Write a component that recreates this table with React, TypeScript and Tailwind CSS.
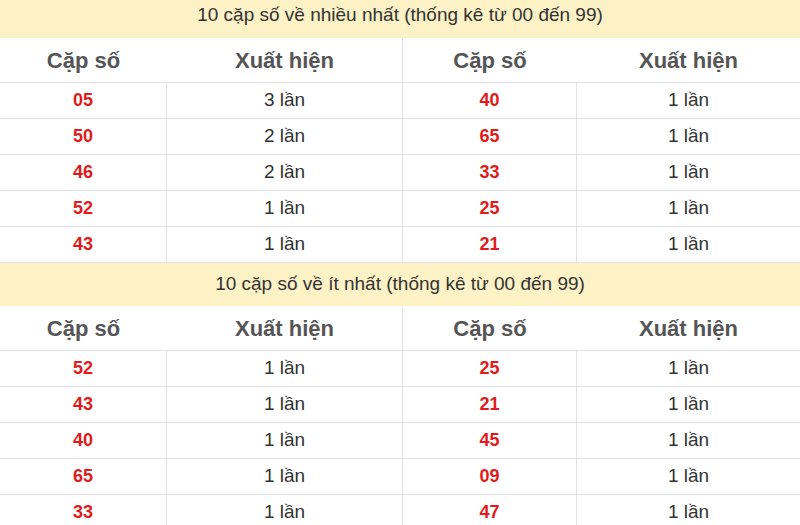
import React from "react";

const top: [string, string, string, string][] = [
  ["05", "3 lần", "40", "1 lần"],
  ["50", "2 lần", "65", "1 lần"],
  ["46", "2 lần", "33", "1 lần"],
  ["52", "1 lần", "25", "1 lần"],
  ["43", "1 lần", "21", "1 lần"],
];
const bottom: [string, string, string, string][] = [
  ["52", "1 lần", "25", "1 lần"],
  ["43", "1 lần", "21", "1 lần"],
  ["40", "1 lần", "45", "1 lần"],
  ["65", "1 lần", "09", "1 lần"],
  ["33", "1 lần", "47", "1 lần"],
];

function Header() {
  return (
    <div className="grid grid-cols-[403px_1fr] h-[45px] border-b border-[#e2e2e2] text-[22px] font-bold text-[#555]">
      <div className="grid grid-cols-[167px_1fr] items-center border-r border-[#e2e2e2]">
        <div className="text-center">Cặp số</div>
        <div className="text-center">Xuất hiện</div>
      </div>
      <div className="grid grid-cols-[174px_1fr] items-center">
        <div className="text-center">Cặp số</div>
        <div className="text-center">Xuất hiện</div>
      </div>
    </div>
  );
}

function Rows({ rows }: { rows: [string, string, string, string][] }) {
  return (
    <>
      {rows.map((r, i) => (
        <div
          key={i}
          className="grid grid-cols-[167px_236px_174px_1fr] h-[36px] border-b border-[#e2e2e2] text-[19px]"
        >
          <div className="flex items-center justify-center border-r border-[#e2e2e2] font-bold text-[18px] text-[#e11b1b]">{r[0]}</div>
          <div className="flex items-center justify-center border-r border-[#e2e2e2] text-[#333]">{r[1]}</div>
          <div className="flex items-center justify-center border-r border-[#e2e2e2] font-bold text-[18px] text-[#e11b1b]">{r[2]}</div>
          <div className="flex items-center justify-center text-[#333]">{r[3]}</div>
        </div>
      ))}
    </>
  );
}

export default function App() {
  return (
    <div className="w-[800px] h-[525px] overflow-hidden bg-white font-['Liberation_Sans',Arial,sans-serif]">
      <div className="h-[38px] bg-[#fdf1c6] text-[19px] text-[#333] text-center leading-[22px] pt-[4px]">
        10 cặp số về nhiều nhất (thống kê từ 00 đến 99)
      </div>
      <Header />
      <Rows rows={top} />
      <div className="h-[43px] bg-[#fdf1c6] text-[19px] text-[#333] flex items-center justify-center">
        10 cặp số về ít nhất (thống kê từ 00 đến 99)
      </div>
      <Header />
      <Rows rows={bottom} />
    </div>
  );
}
